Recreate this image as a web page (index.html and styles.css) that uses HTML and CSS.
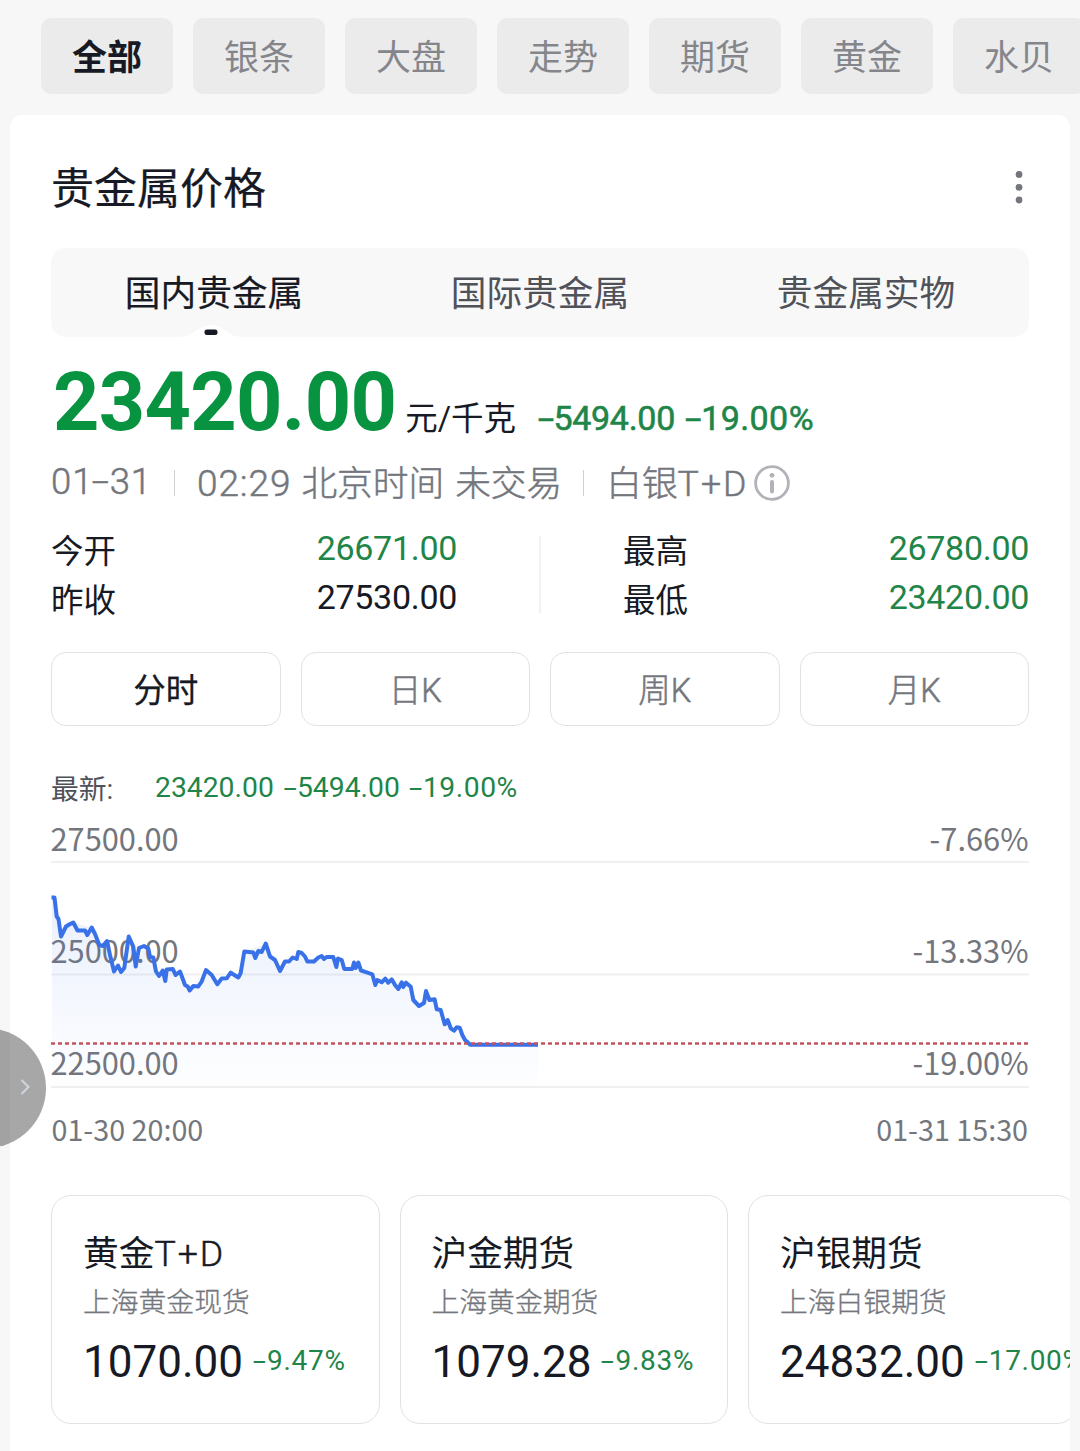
FILE: index.html
```
<!DOCTYPE html>
<html lang="zh-CN">
  <head>
    <meta charset="utf-8">
    <title>贵金属价格</title>
    <link rel="stylesheet" href="styles.css">
  </head>
  <body>
    <nav class="filters">
      <span class="filter active">全部</span>
      <span class="filter">银条</span>
      <span class="filter">大盘</span>
      <span class="filter">走势</span>
      <span class="filter">期货</span>
      <span class="filter">黄金</span>
      <span class="filter">水贝</span>
    </nav>

    <main class="card">
      <header class="card-head">
        <h1>贵金属价格</h1>
        <svg class="more" width="8" height="34" viewBox="0 0 8 34">
          <circle cx="4" cy="3.500" r="3.400"/>
          <circle cx="4" cy="16.300" r="3.400"/>
          <circle cx="4" cy="29" r="3.400"/>
        </svg>
      </header>

      <div class="tabs">
        <span class="tab active">国内贵金属
          <svg class="notch" width="62" height="13" viewBox="0 0 62 13">
            <path d="M0 13C14 13 18 1 31 1S48 13 62 13Z" fill="#fff"/>
            <rect x="24.500" y="5.500" width="13" height="5.500" rx="2.500" fill="#171a24"/>
          </svg>
        </span>
        <span class="tab">国际贵金属</span>
        <span class="tab">贵金属实物</span>
      </div>

      <div class="quote">
        <span class="price">23420.00</span>
        <span class="unit">元/千克</span>
        <span class="change"><i class="minus">-</i>5494.00</span>
        <span class="change rate"><i class="minus">-</i>19.00%</span>
      </div>

      <div class="meta">
        <span class="date">01<i class="minus">-</i>31</span>
        <span class="bar"></span>
        <span class="time">02:29</span>
        <span class="zone">北京时间</span>
        <span class="state">未交易</span>
        <span class="bar"></span>
        <span class="name">白银<span class="latin">T+D</span></span>
        <svg class="info" width="36" height="36" viewBox="0 0 36 36">
          <circle cx="18" cy="18" r="16.4" fill="none" stroke="#b1b3b8" stroke-width="2.8"/>
          <circle cx="18" cy="10.3" r="2.4" fill="#b1b3b8"/>
          <path d="M18 17V26.500" stroke="#b1b3b8" stroke-width="4" stroke-linecap="round"/>
        </svg>
      </div>

      <div class="stats">
        <dl>
          <dt>今开</dt><dd class="down">26671.00</dd>
          <dt>昨收</dt><dd>27530.00</dd>
        </dl>
        <div class="split"></div>
        <dl>
          <dt>最高</dt><dd class="down">26780.00</dd>
          <dt>最低</dt><dd class="down">23420.00</dd>
        </dl>
      </div>

      <div class="periods">
        <span class="period active">分时</span>
        <span class="period">日K</span>
        <span class="period">周K</span>
        <span class="period">月K</span>
      </div>

      <div class="latest">
        <span class="label">最新:</span>
        <span class="down">23420.00</span>
        <span class="down"><i class="minus">-</i>5494.00</span>
        <span class="down"><i class="minus">-</i>19.00%</span>
      </div>

      <svg class="chart" width="978" height="354" viewBox="51 806 978 354">
        <defs>
          <linearGradient id="fill" x1="0" y1="0" x2="0" y2="1">
            <stop offset="0" stop-color="#3a72ea" stop-opacity="0.11"/>
            <stop offset="1" stop-color="#3a72ea" stop-opacity="0.005"/>
          </linearGradient>
        </defs>
        <g class="grid">
          <path d="M51 862H1029M51 974.500H1029M51 1087H1029"/>
        </g>
        <g class="axis">
          <text x="50.500" y="850.500">27500.00</text>
          <text x="50.500" y="962.500">25000.00</text>
          <text x="50.500" y="1075">22500.00</text>
          <text x="1028.500" y="850.500" text-anchor="end">-7.66%</text>
          <text x="1028.500" y="962.500" text-anchor="end">-13.33%</text>
          <text x="1028.500" y="1075" text-anchor="end">-19.00%</text>
        </g>
        <g class="axis dates">
          <text x="51.500" y="1141">01-30 20:00</text>
          <text x="1028" y="1141" text-anchor="end">01-31 15:30</text>
        </g>
        <path fill="url(#fill)" d="M52 897.500L54.500 897.500L61 936L73 922L92 928L103 946L107 941L114 971L121 972L129 936L136 966L144 946L153 957L159 975L173 969L190 990L206 970L217 984L240 974L244 951L266 944L280 971L301 953L307 961L322 956L333 957L344 969L358 963L375 984L392 979L411 987L419 1006L426 991L435 999L445 1024L460 1028L470 1044.700H538V1087H52Z"/>
        <polyline class="line" points="51.500,897.500 54.500,897.500 56.700,916.500 58.500,919 61,936.500 66,926.500 70,924 73.300,922.500 77.500,930.500 85,930.500 87.300,935 91.700,927.500 95,934 99.300,945 103,946 107,941 110,955 114,971.500 118,965.500 121,972 124.300,968 128.700,936.500 133.300,946.500 135.700,966.500 139,948 144,946 148.300,948.500 150,957 153.300,957.500 156,971.500 159,976 162.700,970.500 165.300,981 166.700,969.500 172.700,969 175.700,975 180,971.500 185,985 187.700,986.500 189.700,990.500 193.300,986 198.300,986.500 201.700,981.500 206,970 211.700,975 217.300,984.300 221.700,978.500 226.700,978.300 230.700,972.700 238.300,977.500 240.700,973 244.300,951.500 253.300,952.500 255.300,958 258.300,951 261.700,952 265.700,943.500 270,956.500 275,960 280,971 285,961.500 289,961.500 292.700,957.500 296.700,959 298.300,952 301.700,953 305,956.500 307.300,961.500 314,961.500 318.300,957.500 321.700,956 324,959 326.700,957 333.300,957 336.300,967 338,958.500 341.700,960 344.300,969 352.300,969 354,962.500 355.700,968 358.300,962.500 361,970.500 366.700,972.300 372.300,974.300 375.300,985 377.300,980 381.700,982.300 385.300,978.700 388.300,982.700 391.700,979.300 395,985 398.300,989 401.700,982.300 403.300,987 406,982.700 410.700,986.700 413.300,1000 419,1006 424,1003 426,991 429.300,1000 434.700,999.300 436.700,1009.300 440.700,1010 444.700,1024.300 447.700,1020 450.700,1028.300 454,1030.700 456.700,1027.300 459.700,1027.700 462.300,1035 465,1040 468.300,1042.700 470,1044.700 538,1044.700"/>
        <path class="last" d="M51 1043.500H1029"/>
      </svg>

      <div class="related">
        <section class="item">
          <h2>黄金<span class="latin">T+D</span></h2>
          <p>上海黄金现货</p>
          <div class="item-price">1070.00<span class="down"><i class="minus">-</i>9.47%</span></div>
        </section>
        <section class="item">
          <h2>沪金期货</h2>
          <p>上海黄金期货</p>
          <div class="item-price">1079.28<span class="down"><i class="minus">-</i>9.83%</span></div>
        </section>
        <section class="item">
          <h2>沪银期货</h2>
          <p>上海白银期货</p>
          <div class="item-price">24832.00<span class="down"><i class="minus">-</i>17.00%</span></div>
        </section>
      </div>
    </main>

    <div class="handle">
      <svg width="10" height="18" viewBox="0 0 10 18">
        <path d="M1.500 2L8.500 9L1.500 16" fill="none" stroke="#ccd5dd" stroke-width="2.200"/>
      </svg>
    </div>
  </body>
</html>
```
FILE: styles.css
```
* {
  box-sizing: border-box;
  margin: 0;
  padding: 0;
}
html {
  overflow: hidden;
}
body {
  width: 1080px;
  height: 1451px;
  overflow: hidden;
  background: #f7f7f8;
  color: #171a24;
  font-family: Roboto, "Noto Sans CJK SC", sans-serif;
  white-space: nowrap;
}
.down {
  color: #1f8549;
}
/* the hyphen is drawn wide, like a figure dash */
.minus {
  display: inline-block;
  width: 0.45em;
  font-style: normal;
  text-align: center;
  transform: scaleX(1.7);
}
.latin {
  font-weight: 300;
  letter-spacing: 2px;
  -webkit-text-stroke: 0.5px;
}

.filters {
  display: flex;
  gap: 20px;
  padding: 18px 0 21px 41px;
}
.filter {
  flex: none;
  width: 132px;
  height: 76px;
  padding-top: 1px;
  border-radius: 10px;
  background: #ebebeb;
  color: #85868b;
  font-size: 35px;
  line-height: 80px;
  text-align: center;
}
.filter.active {
  color: #171a24;
  font-weight: bold;
}

.card {
  width: 1060px;
  height: 1400px;
  margin-left: 10px;
  padding: 38px 41px 0;
  border-radius: 12px;
  background: #fff;
  overflow: hidden;
}
.card-head {
  display: flex;
  align-items: center;
  justify-content: space-between;
  height: 70px;
  margin-bottom: 25px;
  padding-right: 6px;
}
.card-head h1 {
  padding-top: 2px;
  font-size: 43px;
  font-weight: 400;
  line-height: 70px;
  -webkit-text-stroke: 0.2px;
}
.more {
  fill: #74767d;
}

.tabs {
  display: flex;
  height: 89px;
  border-radius: 15px;
  background: #f8f8f9;
}
.tab {
  position: relative;
  flex: 1;
  color: #505259;
  font-size: 35.7px;
  line-height: 92px;
  text-align: center;
}
.tab.active {
  color: #171a24;
  -webkit-text-stroke: 0.2px;
}
.notch {
  position: absolute;
  left: 129px;
  bottom: 0;
}

.quote {
  display: flex;
  align-items: baseline;
  height: 109px;
  padding: 21px 0 0 2px;
  line-height: 90px;
}
.price {
  margin-right: 9px;
  color: #07933f;
  font-size: 81px;
  font-weight: bold;
  letter-spacing: -0.7px;
}
.unit {
  margin-right: 22px;
  font-size: 32.5px;
}
.change {
  margin-right: 11px;
  color: #1f8549;
  font-size: 34px;
  letter-spacing: -0.3px;
  -webkit-text-stroke: 0.6px;
}
.rate {
  letter-spacing: 0.4px;
}

.meta {
  display: flex;
  align-items: center;
  height: 40px;
  margin-top: 17px;
  color: #74767d;
  font-size: 35.7px;
  font-weight: 300;
  line-height: 40px;
  -webkit-text-stroke: 0.5px;
}
.date {
  padding-bottom: 2px;
  font-size: 36.5px;
}
.date, .time {
  letter-spacing: 0.9px;
}
.date {
  margin-right: 1px;
}
.time, .zone, .state, .name {
  padding-top: 2px;
}
.bar {
  width: 1px;
  height: 26px;
  margin: 0 22px 0 21px;
  background: #cfd0d3;
}
.time {
  margin-right: 10px;
  font-size: 37px;
}
.zone {
  margin-right: 11px;
}
.info {
  margin-left: 6px;
}

.stats {
  display: flex;
  margin-top: 21px;
}
.stats dl {
  display: grid;
  grid-template-columns: 1fr auto;
  width: 406px;
  line-height: 49px;
}
.stats dt {
  padding-top: 4px;
  height: 49px;
  font-size: 32.5px;
}
.stats dd {
  font-size: 34px;
  letter-spacing: -0.3px;
}
.split {
  width: 2px;
  height: 77px;
  margin: 12px 82px 0;
  background: #f1f1f2;
}

.periods {
  display: grid;
  grid-template-columns: repeat(4, 1fr);
  gap: 20px;
  margin-top: 30px;
}
.period {
  height: 74px;
  border: 1px solid #e2e2e4;
  border-radius: 15px;
  color: #74767d;
  font-size: 32.5px;
  font-weight: 300;
  line-height: 76px;
  text-align: center;
  -webkit-text-stroke: 0.5px;
}
.period.active {
  color: #171a24;
  font-weight: 400;
  -webkit-text-stroke: 0.3px;
}

.latest {
  display: flex;
  gap: 9px;
  height: 36px;
  margin-top: 44px;
  font-size: 28.3px;
  line-height: 36px;
}
.latest .label {
  width: 95px;
  padding-top: 2px;
  color: #505259;
  font-size: 27.8px;
}
.latest .minus {
  width: 0.5em;
}
.latest .down:last-child {
  letter-spacing: 0.5px;
}

.chart {
  display: block;
}
.grid {
  stroke: #f0f0f1;
  stroke-width: 2;
}
.axis {
  fill: #74767d;
  font-family: "Noto Sans CJK SC", sans-serif;
  font-size: 30.8px;
}
.dates {
  font-size: 28.7px;
}
.line {
  fill: none;
  stroke: #3871e8;
  stroke-width: 4;
  stroke-linejoin: round;
}
.last {
  stroke: #c4525c;
  stroke-width: 2.4;
  stroke-dasharray: 4 3;
}

.related {
  display: flex;
  gap: 20px;
  margin-top: 35px;
}
.item {
  flex: none;
  width: 328.5px;
  height: 229px;
  padding: 32px 31px 0;
  border: 1px solid #e2e2e4;
  border-radius: 20px;
}
.item h2 {
  font-size: 35.7px;
  font-weight: normal;
  line-height: 52px;
}
.item p {
  color: #74767d;
  font-size: 27.8px;
  font-weight: 300;
  line-height: 46px;
  -webkit-text-stroke: 0.3px;
}
.item-price {
  display: flex;
  align-items: center;
  gap: 10px;
  margin-top: 10px;
  font-size: 44px;
  line-height: 52px;
}
.item-price .down {
  margin-top: -3px;
  font-size: 28px;
  letter-spacing: 0.7px;
}
.item-price .minus {
  width: 0.5em;
}

/* floating drawer handle, half off the left edge */
.handle {
  position: absolute;
  left: -74px;
  top: 1028px;
  display: flex;
  align-items: center;
  justify-content: flex-end;
  width: 120px;
  height: 120px;
  padding: 0 16px 2px 0;
  border-radius: 50%;
  background: rgba(0, 0, 0, 0.345);
}
```
